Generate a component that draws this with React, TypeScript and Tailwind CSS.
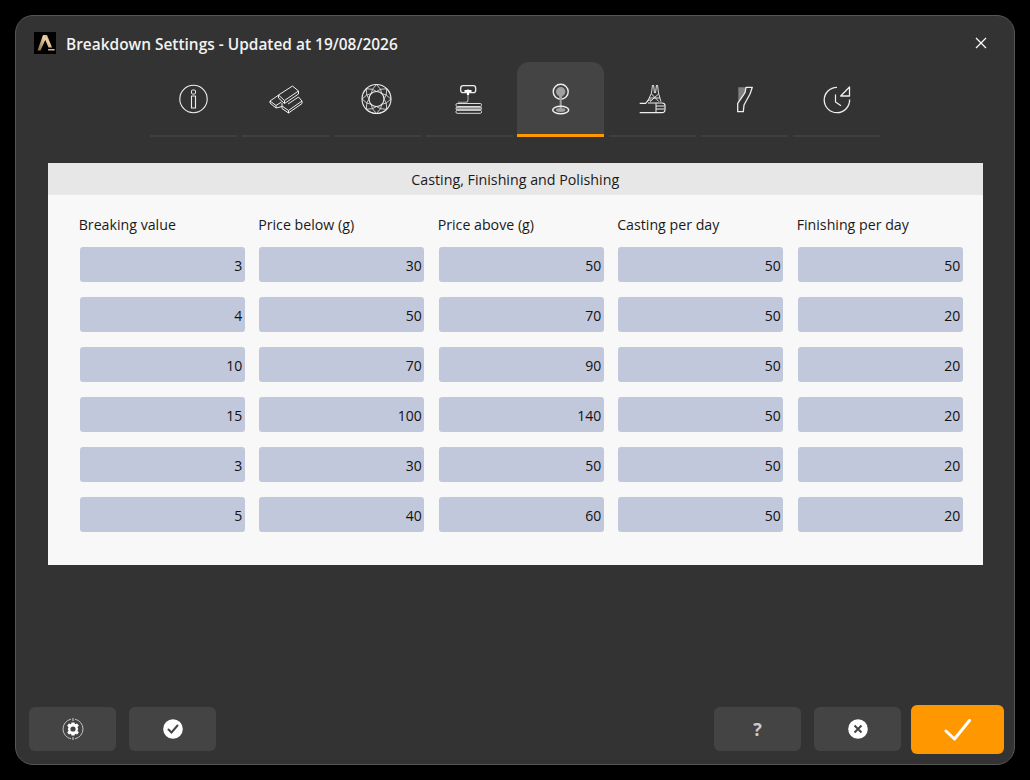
import type { ReactNode } from 'react'

const columns = [
  { label: 'Breaking value', values: [3, 4, 10, 15, 3, 5] },
  { label: 'Price below (g)', values: [30, 50, 70, 100, 30, 40] },
  { label: 'Price above (g)', values: [50, 70, 90, 140, 50, 60] },
  { label: 'Casting per day', values: [50, 50, 50, 50, 50, 50] },
  { label: 'Finishing per day', values: [50, 20, 20, 20, 20, 20] },
]

// brilliant cut facets, worked out once instead of typing 48 coordinates
const polar = (r: number, deg: number) => {
  const a = (deg * Math.PI) / 180
  return `${(15.5 + r * Math.cos(a)).toFixed(2)} ${(16 + r * Math.sin(a)).toFixed(2)}`
}
const facets = Array.from({ length: 8 }, (_, i) => {
  const a = i * 45
  return [
    `M${polar(14.5, a)} L${polar(10.5, a + 22.5)} L${polar(14.5, a + 45)}`,
    `M${polar(10.5, a + 22.5)} L${polar(7.5, a)} L${polar(10.5, a - 22.5)}`,
  ].join(' ')
}).join(' ')

const Icon = ({ children }: { children: ReactNode }) => (
  <svg width="32" height="32" viewBox="0 0 32 32" fill="none" stroke="#eeeeee" strokeWidth="1" strokeLinejoin="round" className="overflow-visible">
    {children}
  </svg>
)

const tabs: ReactNode[] = [
  <Icon key="info">
    <circle cx="15.5" cy="16" r="13.7" strokeWidth="1.1" />
    <rect x="13.5" y="7" width="4" height="4" rx="1" />
    <rect x="13.5" y="13" width="4" height="12" strokeWidth="1.1" />
  </Icon>,
  <Icon key="gold">
    <path d="M9.5 12 L23.5 3 L29.5 8 L15.5 17.5 Z M15.5 17.5 V20.5 L29.5 11 V8 M9.5 12 V15 L15.5 20.5" />
    <path d="M19 21 L29.5 14 L33 18 L19.5 27.5 L13 23 V20 M33 18 V20.5 L19.5 30 L13 25.5 V23 M19.5 27.5 V30" />
    <path d="M9 12.5 L1 18 L7 22.5 L12.5 19 M1 18 V20 L7 25 L13 23.5 M7 22.5 V25" />
  </Icon>,
  <Icon key="diamond">
    <circle cx="15.5" cy="16" r="14.5" strokeWidth="1.1" />
    <circle cx="15.5" cy="16" r="7.5" strokeWidth="1.1" />
    <path d={facets} strokeWidth="0.8" />
  </Icon>,
  <Icon key="wax">
    <rect x="7.7" y="2.7" width="15" height="7" rx="2.5" strokeWidth="1.3" />
    <path d="M11.5 8 H18.5 M15 6.5 V12" stroke="#ffffff" strokeWidth="2.2" />
    <path d="M15 12 V17 Q15 19.3 12.5 19.3 H5" stroke="#aaaaaa" strokeWidth="1.1" />
    <rect x="3" y="20.5" width="25.5" height="3" rx="1.2" stroke="#dddddd" />
    <rect x="3" y="24" width="25.5" height="2.8" rx="1.2" stroke="#dddddd" fill="#888888" />
    <rect x="3" y="27.3" width="25.5" height="3" rx="1.2" stroke="#dddddd" />
  </Icon>,
  <Icon key="casting">
    <circle cx="15.7" cy="8.7" r="7.5" strokeWidth="1.4" />
    <circle cx="15.7" cy="8.7" r="4.7" fill="#a0a0a0" stroke="none" />
    <path d="M13.5 11 H18 L16.7 16 V27 H14.7 V16 Z" fill="#a0a0a0" stroke="none" />
    <ellipse cx="15.7" cy="27" rx="8" ry="3.8" strokeWidth="1.5" />
    <ellipse cx="15.7" cy="27" rx="4.7" ry="1.9" fill="#a0a0a0" stroke="none" />
  </Icon>,
  <Icon key="setting">
    <path d="M15.5 2 L14.5 10 M16.5 2 L17.5 10 M19.5 2 L18.5 10 M20.5 2 L21.5 10 M14.5 10 L10.5 18.7 M21.5 10 L24 18.7 M12 15 H23 M14.5 11 L22 18.7 M21.5 11 L13 18.7" strokeWidth="0.9" />
    <path d="M2.7 20.3 H8.7 L11.3 17 H14.5 M11 20 H25 Q28 20 28 22.5 V26.5 Q28 29.7 25 29.7 H2.7" strokeWidth="1.2" />
    <path d="M19 23 H27.5 M19 26 H27.5 M19 20 V29" strokeWidth="1" />
  </Icon>,
  <Icon key="finish">
    <path d="M9.3 4.3 H17 L16 9.7 L9.3 19 Z" fill="#808080" stroke="none" />
    <path d="M17 4.3 H23.3 L21 11 L15 22 L14.3 28.7 H8.7 V20.3 L16 9.7 Z" strokeWidth="1.3" />
  </Icon>,
  <Icon key="history">
    <path d="M16 4.3 A12.7 12.7 0 1 0 28.6 16.5" strokeWidth="1.3" />
    <path d="M14.5 11.5 V19 L20 22.7" strokeWidth="1.2" />
    <path d="M28.5 4 V13 H19.7 Z" strokeWidth="1.3" />
  </Icon>,
]

const FooterButton = ({ children }: { children: ReactNode }) => (
  <button className="mt-[2px] flex h-[44px] w-[87px] items-center justify-center rounded-md bg-[#444444]">{children}</button>
)

export default function App() {
  return (
    <div className="h-[780px] w-[1030px] overflow-hidden bg-black p-[15px] font-['Open_Sans',sans-serif]">
      <div className="flex h-[750px] flex-col rounded-[18px] border border-[#555555] bg-[#333333]">
        <div className="flex h-[38px] items-end pl-[18px] pr-[27px]">
          <svg width="22" height="22" viewBox="0 0 22 22" className="bg-black">
            <defs>
              <linearGradient id="logo" x1="0" y1="1" x2="1" y2="0">
                <stop offset="0" stopColor="#8a6a3c" />
                <stop offset="0.6" stopColor="#ecd0a4" />
                <stop offset="1" stopColor="#b08a58" />
              </linearGradient>
            </defs>
            <path d="M9 3 H13 L18 15.5 H14.5 L11.3 8 L6.5 18.5 H3.5 Z M14 17 H20.5 V18.5 H14 Z" fill="url(#logo)" />
          </svg>
          <h1 className="ml-[10px] -mb-[1px] flex-1 text-[15.45px] leading-[22px] font-semibold text-[#f2f2f2]">
            Breakdown Settings - Updated at 19/08/2026
          </h1>
          <svg width="12" height="12" viewBox="0 0 12 12" stroke="#ffffff" strokeWidth="1.2" className="mb-[5px]">
            <path d="M1 1 L11 11 M11 1 L1 11" />
          </svg>
        </div>

        <div className="ml-[134px] mt-[8px] flex h-[75px] gap-[4.86px]">
          {tabs.map((icon, i) => (
            <div
              key={i}
              className={
                i === 4
                  ? 'flex w-[87px] items-start justify-center rounded-t-xl border-b-[3px] border-[#ff9800] bg-[#444444] pt-[21px]'
                  : 'flex w-[87px] items-start justify-center border-b-2 border-[#3f3f3f] pt-[21px]'
              }
            >
              {icon}
            </div>
          ))}
        </div>

        <section className="ml-[31.5px] mt-[26px] w-[935px]">
          <div className="ml-[0.5px] h-[32px] bg-[#e7e7e7] text-center text-[14.25px] leading-[34px] text-[#1a1a1a]">
            Casting, Finishing and Polishing
          </div>
          <div className="flex h-[370px] gap-[14.5px] bg-[#f8f8f8] pl-[32.2px] pt-[20px]">
            {columns.map(col => (
              <div key={col.label} className="w-[165px]">
                <div className="-ml-[1px] h-[32px] text-[14.2px] leading-[20px] text-[#1a1a1a]">{col.label}</div>
                <div className="flex flex-col gap-[15px]">
                  {col.values.map((v, i) => (
                    <div
                      key={i}
                      className="h-[35px] rounded-[3px] bg-[#c2c8db] pr-[2.5px] text-right text-[14px] leading-[37px] text-[#111111]"
                    >
                      {v}
                    </div>
                  ))}
                </div>
              </div>
            ))}
          </div>
        </section>

        <footer className="mt-auto mb-[10px] flex items-start pl-[13px] pr-[10px]">
          <div className="flex gap-[13px]">
            <FooterButton>
              <svg width="22" height="22" viewBox="0 0 22 22" fill="none">
                <path d="M13 1.2 A10 10 0 0 1 13 20.8 M9 20.8 A10 10 0 0 1 9 1.2" stroke="#c0c0c0" strokeWidth="1" />
                <path d="M11 0 V3 M11 19 V22" stroke="#c0c0c0" strokeWidth="1.2" />
                <path
                  d="M9.5 4.5 H12.5 L13 6.2 L15 5.4 L16.8 7.5 L15.5 9.2 L16.2 11 L15.5 12.8 L16.8 14.5 L15 16.6 L13 15.8 L12.5 17.5 H9.5 L9 15.8 L7 16.6 L5.2 14.5 L6.5 12.8 L5.8 11 L6.5 9.2 L5.2 7.5 L7 5.4 L9 6.2 Z"
                  fill="#ffffff"
                />
                <circle cx="11" cy="11" r="2.6" fill="#444444" />
              </svg>
            </FooterButton>
            <FooterButton>
              <svg width="20" height="20" viewBox="0 0 20 20" fill="none">
                <circle cx="10" cy="10" r="9.8" fill="#ffffff" />
                <path d="M5.5 10.5 L8.5 13.5 L14.5 6.5" stroke="#444444" strokeWidth="2" strokeLinecap="round" />
              </svg>
            </FooterButton>
          </div>
          <div className="ml-auto flex items-start">
            <FooterButton>
              <span className="text-[18px] font-bold text-[#cccccc]">?</span>
            </FooterButton>
            <div className="ml-[13px]">
              <FooterButton>
                <svg width="20" height="20" viewBox="0 0 20 20" fill="none">
                  <circle cx="10" cy="10" r="9.8" fill="#ffffff" />
                  <path d="M6.5 6.5 L13.5 13.5 M13.5 6.5 L6.5 13.5" stroke="#444444" strokeWidth="2" />
                </svg>
              </FooterButton>
            </div>
            <button className="ml-[10px] flex h-[49px] w-[93px] items-center justify-center rounded-md bg-[#ff9800]">
              <svg width="28" height="24" viewBox="0 0 28 24" fill="none">
                <path d="M2 13 L10.5 21 L25.5 2.5" stroke="#ffffff" strokeWidth="3" strokeLinecap="round" strokeLinejoin="round" />
              </svg>
            </button>
          </div>
        </footer>
      </div>
    </div>
  )
}
